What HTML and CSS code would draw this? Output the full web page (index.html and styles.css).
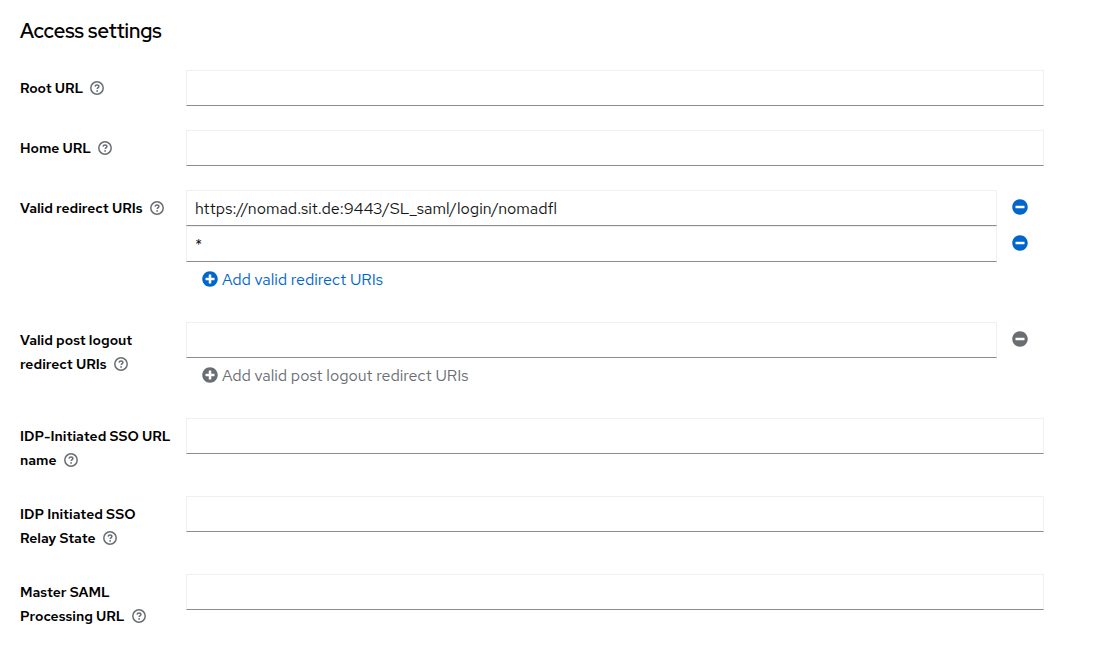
FILE: index.html
```html
<!DOCTYPE html>
<html lang="en">
<head>
<meta charset="utf-8">
<meta name="viewport" content="width=device-width, initial-scale=1">
<title>Access settings</title>
<link rel="stylesheet" href="styles.css">
</head>
<body>
<svg class="sprite" aria-hidden="true">
  <symbol id="help" viewBox="0 0 14 14">
    <circle cx="7" cy="7" r="6.200" fill="none" stroke="currentColor" stroke-width="1.500"/>
    <path d="M5.100 5.600C5.200 4.500 6 4.100 7 4.100s1.900.5 1.900 1.500C8.900 6.700 7.200 6.700 7.200 8" fill="none" stroke="currentColor" stroke-width="1.500"/>
    <circle cx="7.100" cy="9.900" r=".9" fill="currentColor"/>
  </symbol>
  <symbol id="minus" viewBox="0 0 512 512">
    <path fill="currentColor" d="M256 8C119 8 8 119 8 256s111 248 248 248 248-111 248-248S393 8 256 8zM124 296c-6.600 0-12-5.400-12-12v-56c0-6.600 5.400-12 12-12h264c6.600 0 12 5.400 12 12v56c0 6.600-5.400 12-12 12H124z"/>
  </symbol>
  <symbol id="plus" viewBox="0 0 512 512">
    <path fill="currentColor" d="M256 8C119 8 8 119 8 256s111 248 248 248 248-111 248-248S393 8 256 8zm144 276c0 6.600-5.400 12-12 12h-92v92c0 6.600-5.400 12-12 12h-56c-6.600 0-12-5.400-12-12v-92h-92c-6.600 0-12-5.400-12-12v-56c0-6.600 5.400-12 12-12h92v-92c0-6.600 5.400-12 12-12h56c6.600 0 12 5.400 12 12v92h92c6.600 0 12 5.400 12 12v56z"/>
  </symbol>
</svg>
<main class="page">
  <h1 class="title">Access settings</h1>
  <form class="form">
    <div class="group">
      <div class="label"><label for="root">Root URL</label><button class="help" type="button" aria-label="Help for Root URL"><svg><use href="#help"/></svg></button></div>
      <input class="input" id="root" type="text">
    </div>
    <div class="group">
      <div class="label"><label for="home">Home URL</label><button class="help" type="button" aria-label="Help for Home URL"><svg><use href="#help"/></svg></button></div>
      <input class="input" id="home" type="text">
    </div>
    <div class="group">
      <div class="label"><label for="redirect">Valid redirect URIs</label><button class="help" type="button" aria-label="Help for Valid redirect URIs"><svg><use href="#help"/></svg></button></div>
      <div class="list">
        <div class="item"><input class="input" id="redirect" type="text" value="https://nomad.sit.de:9443/SL_saml/login/nomadfl"><button class="remove" type="button" aria-label="Remove"><svg><use href="#minus"/></svg></button></div>
        <div class="item"><input class="input" type="text" value="*" aria-label="Valid redirect URI 2"><button class="remove" type="button" aria-label="Remove"><svg><use href="#minus"/></svg></button></div>
        <button class="add" type="button"><svg><use href="#plus"/></svg>Add valid redirect URIs</button>
      </div>
    </div>
    <div class="group">
      <div class="label"><label for="logout">Valid post logout redirect URIs</label><button class="help" type="button" aria-label="Help for Valid post logout redirect URIs"><svg><use href="#help"/></svg></button></div>
      <div class="list">
        <div class="item"><input class="input" id="logout" type="text"><button class="remove" type="button" aria-label="Remove" disabled><svg><use href="#minus"/></svg></button></div>
        <button class="add" type="button" disabled><svg><use href="#plus"/></svg>Add valid post logout redirect URIs</button>
      </div>
    </div>
    <div class="group">
      <div class="label"><label for="sso">IDP-Initiated SSO URL name</label><button class="help" type="button" aria-label="Help for IDP-Initiated SSO URL name"><svg><use href="#help"/></svg></button></div>
      <input class="input" id="sso" type="text">
    </div>
    <div class="group">
      <div class="label"><label for="relay">IDP Initiated SSO Relay State</label><button class="help" type="button" aria-label="Help for IDP Initiated SSO Relay State"><svg><use href="#help"/></svg></button></div>
      <input class="input" id="relay" type="text">
    </div>
    <div class="group">
      <div class="label"><label for="master">Master SAML Processing URL</label><button class="help" type="button" aria-label="Help for Master SAML Processing URL"><svg><use href="#help"/></svg></button></div>
      <input class="input" id="master" type="text">
    </div>
  </form>
</main>
</body>
</html>
```
FILE: styles.css
```css
* { box-sizing: border-box; }
body {
  margin: 0;
  background: #fff;
  color: #151515;
  font-family: "Red Hat Text", "Open Sans", sans-serif;
  font-size: 16px;
  line-height: 24px;
}
.sprite { display: none; }
.page { padding: 16px 52px 24px 20px; }
.title {
  margin: 0 0 24px;
  color: #000;
  font-family: "Red Hat Display", Inter, sans-serif;
  font-size: 20px;
  font-weight: 600;
  line-height: 30px;
}
.form { display: grid; gap: 24px; }
.group {
  display: grid;
  grid-template-columns: 152px minmax(0, 1fr);
  gap: 14px;
  align-items: start;
}
.label {
  padding-top: 6px;
  color: #000;
  font-size: 14px;
  font-weight: 600;
}
.input {
  width: 100%;
  height: 36px;
  padding: 0 8px;
  border: 1px solid #f0f0f0;
  border-bottom-color: #8a8d90;
  border-radius: 0;
  background: #fff;
  color: #151515;
  font: inherit;
}
button {
  border: 0;
  background: none;
  color: #06c;
  font: inherit;
  cursor: pointer;
}
button:disabled { color: #6a6e73; cursor: default; }
.help {
  margin-left: 7px;
  padding: 0 0 2px;
  color: #6a6e73;
  line-height: 14px;
  vertical-align: middle;
}
.help svg { display: block; width: 14px; height: 14px; }
.item { display: flex; }
.remove { padding: 9px 16px 11px 15px; }
.remove svg { display: block; width: 16px; height: 16px; }
.add {
  display: flex;
  align-items: center;
  gap: 4px;
  padding: 6px 16px;
}
.add svg { width: 16px; height: 16px; margin-bottom: 2px; }
```
